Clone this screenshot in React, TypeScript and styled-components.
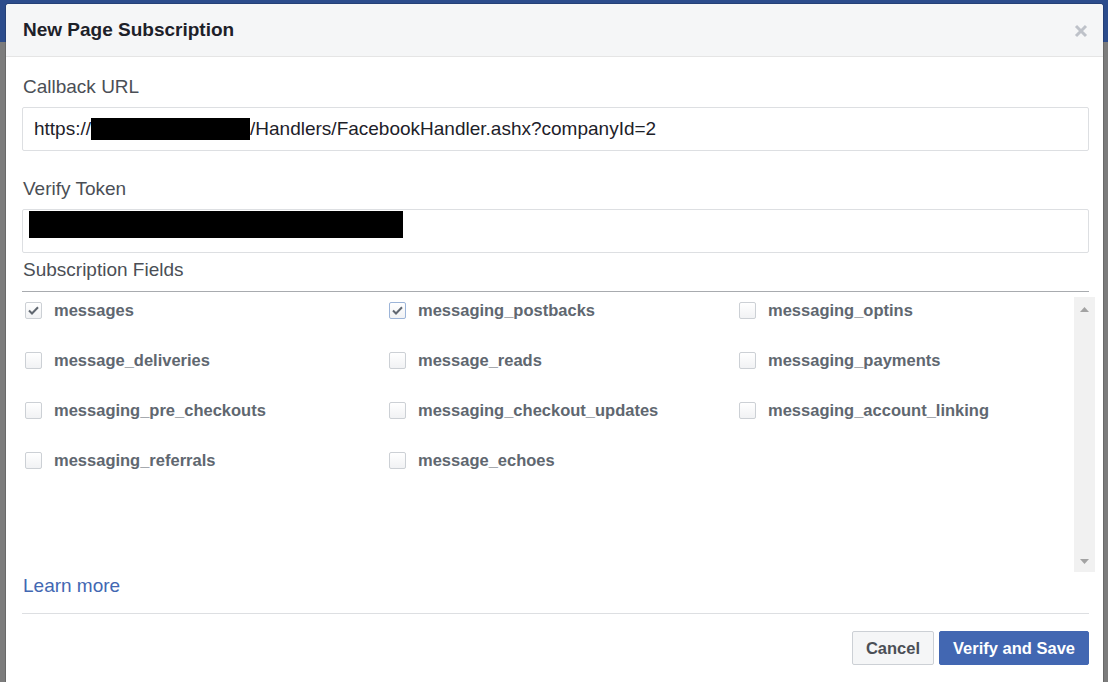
import React from "react";
import styled, { createGlobalStyle } from "styled-components";

const GlobalStyle = createGlobalStyle`
  html, body {
    margin: 0;
    padding: 0;
    overflow: hidden;
  }
  body {
    font-family: "Liberation Sans", Arial, Helvetica, sans-serif;
  }
`;

type Field = { name: string; checked?: boolean; focused?: boolean };

const fields: Field[] = [
  { name: "messages", checked: true },
  { name: "messaging_postbacks", checked: true, focused: true },
  { name: "messaging_optins" },
  { name: "message_deliveries" },
  { name: "message_reads" },
  { name: "messaging_payments" },
  { name: "messaging_pre_checkouts" },
  { name: "messaging_checkout_updates" },
  { name: "messaging_account_linking" },
  { name: "messaging_referrals" },
  { name: "message_echoes" },
];

const CloseIcon = () => (
  <svg width="14" height="14" viewBox="0 0 14 14">
    <path d="M2 2 L12 12 M12 2 L2 12" stroke="#bec2c9" strokeWidth="3" strokeLinecap="butt" />
  </svg>
);

const CheckMark = () => (
  <svg width="11" height="9" viewBox="0 0 11 9">
    <path d="M1 4.5 L4 7.5 L10 1.2" stroke="#606770" strokeWidth="2" fill="none" />
  </svg>
);

const Arrow: React.FC<{ up?: boolean }> = ({ up }) => (
  <svg width="9" height="5" viewBox="0 0 9 5">
    <path d={up ? "M0 5 L4.5 0 L9 5 Z" : "M0 0 L4.5 5 L9 0 Z"} fill="#a3a3a3" />
  </svg>
);

const App: React.FC = () => {
  return (
    <>
      <GlobalStyle />
      <Backdrop>
        <Dialog>
          <Header>
            <Title>New Page Subscription</Title>
            <CloseButton>
              <CloseIcon />
            </CloseButton>
          </Header>
          <Body>
            <Label>Callback URL</Label>
            <Input>
              https://<Redacted $w={159} $h={22} />/Handlers/FacebookHandler.ashx?companyId=2
            </Input>
            <Label $top={27}>Verify Token</Label>
            <Input $pad={6} $align="flex-start">
              <Redacted $w={374} $h={27} />
            </Input>
            <SectionLabel>Subscription Fields</SectionLabel>
            <ScrollBox>
              <FieldGrid>
                {fields.map((f) => (
                  <FieldItem key={f.name}>
                    <Checkbox $focused={f.focused}>{f.checked && <CheckMark />}</Checkbox>
                    <FieldName>{f.name}</FieldName>
                  </FieldItem>
                ))}
              </FieldGrid>
              <ScrollTrack>
                <Arrow up />
                <Arrow />
              </ScrollTrack>
            </ScrollBox>
            <LearnMore href="#">Learn more</LearnMore>
          </Body>
          <Footer>
            <Button>Cancel</Button>
            <Button $primary>Verify and Save</Button>
          </Footer>
        </Dialog>
      </Backdrop>
    </>
  );
};

export default App;

const Backdrop = styled.div`
  width: 1108px;
  height: 682px;
  overflow: hidden;
  background: linear-gradient(#2c4c8c 0, #2c4c8c 42px, #7c7c7c 42px, #7c7c7c 100%);
  padding: 4px 5px 0 6px;
  box-sizing: border-box;
`;

const Dialog = styled.div`
  background: #ffffff;
  border-radius: 3px 3px 0 0;
  height: 720px;
  box-shadow: 0 0 0 1px rgba(0, 0, 0, 0.15);
`;

const Header = styled.div`
  height: 53px;
  background: #f5f6f7;
  border-bottom: 1px solid #e5e5e5;
  border-radius: 3px 3px 0 0;
  display: flex;
  align-items: center;
  justify-content: space-between;
  padding: 0 15px 0 17px;
  box-sizing: border-box;
`;

const Title = styled.div`
  font-size: 19px;
  font-weight: bold;
  color: #1d2129;
`;

const CloseButton = styled.div`
  display: flex;
  align-items: center;
  padding-top: 1px;
`;

const Body = styled.div`
  padding: 19px 14px 0 16px;
  display: flex;
  flex-direction: column;
`;

const Label = styled.div<{ $top?: number }>`
  font-size: 19px;
  line-height: 22px;
  color: #4b4f56;
  margin-top: ${(p) => p.$top ?? 0}px;
  margin-left: 1px;
`;

const SectionLabel = styled(Label)`
  margin-top: 6px;
  padding-bottom: 10px;
  border-bottom: 1px solid #a8abaf;
  margin-left: 0;
  padding-left: 1px;
`;

const Input = styled.div<{ $pad?: number; $align?: string }>`
  margin-top: 9px;
  height: 44px;
  box-sizing: border-box;
  border: 1px solid #dddfe2;
  border-radius: 2px;
  display: flex;
  align-items: ${(p) => p.$align ?? "center"};
  padding: ${(p) => (p.$pad != null ? `1px ${p.$pad}px` : "0 11px")};
  font-size: 19px;
  color: #1d2129;
  white-space: nowrap;
`;

const Redacted = styled.span<{ $w: number; $h: number }>`
  display: inline-block;
  width: ${(p) => p.$w}px;
  height: ${(p) => p.$h}px;
  background: #000;
`;

const ScrollBox = styled.div`
  margin-top: 5px;
  margin-right: -6px;
  height: 275px;
  display: flex;
`;

const FieldGrid = styled.div`
  flex: 1;
  display: grid;
  grid-template-columns: 364px 350px 1fr;
  grid-auto-rows: 50px;
  align-content: start;
  padding: 4px 0 0 3px;
`;

const FieldItem = styled.label`
  display: flex;
  align-items: center;
  gap: 12px;
  height: 18px;
`;

const Checkbox = styled.span<{ $focused?: boolean }>`
  width: 17px;
  height: 17px;
  box-sizing: border-box;
  border: 1px solid ${(p) => (p.$focused ? "#9cb4d8" : "#ccd0d5")};
  border-radius: 2px;
  background: linear-gradient(#ffffff, #f1f2f4);
  display: flex;
  align-items: center;
  justify-content: center;
`;

const FieldName = styled.span`
  font-size: 16.5px;
  font-weight: bold;
  color: #606770;
`;

const ScrollTrack = styled.div`
  width: 21px;
  background: #f1f1f1;
  display: flex;
  flex-direction: column;
  justify-content: space-between;
  align-items: center;
  padding: 10px 0 8px;
  box-sizing: border-box;
`;

const LearnMore = styled.a`
  margin-top: 3px;
  font-size: 19px;
  line-height: 22px;
  color: #4267b2;
  text-decoration: none;
  margin-left: 1px;
  align-self: flex-start;
`;

const Footer = styled.div`
  margin: 16px 14px 0 16px;
  border-top: 1px solid #dddfe2;
  padding-top: 17px;
  display: flex;
  justify-content: flex-end;
  gap: 5px;
`;

const Button = styled.button<{ $primary?: boolean }>`
  height: 34px;
  box-sizing: border-box;
  padding: 0 ${(p) => (p.$primary ? 13 : 13)}px;
  font-family: "Liberation Sans", Arial, sans-serif;
  font-size: 16.5px;
  font-weight: bold;
  border-radius: 2px;
  border: 1px solid ${(p) => (p.$primary ? "#4267b2" : "#ccd0d5")};
  background: ${(p) => (p.$primary ? "#4267b2" : "#f5f6f7")};
  color: ${(p) => (p.$primary ? "#ffffff" : "#4b4f56")};
`;
